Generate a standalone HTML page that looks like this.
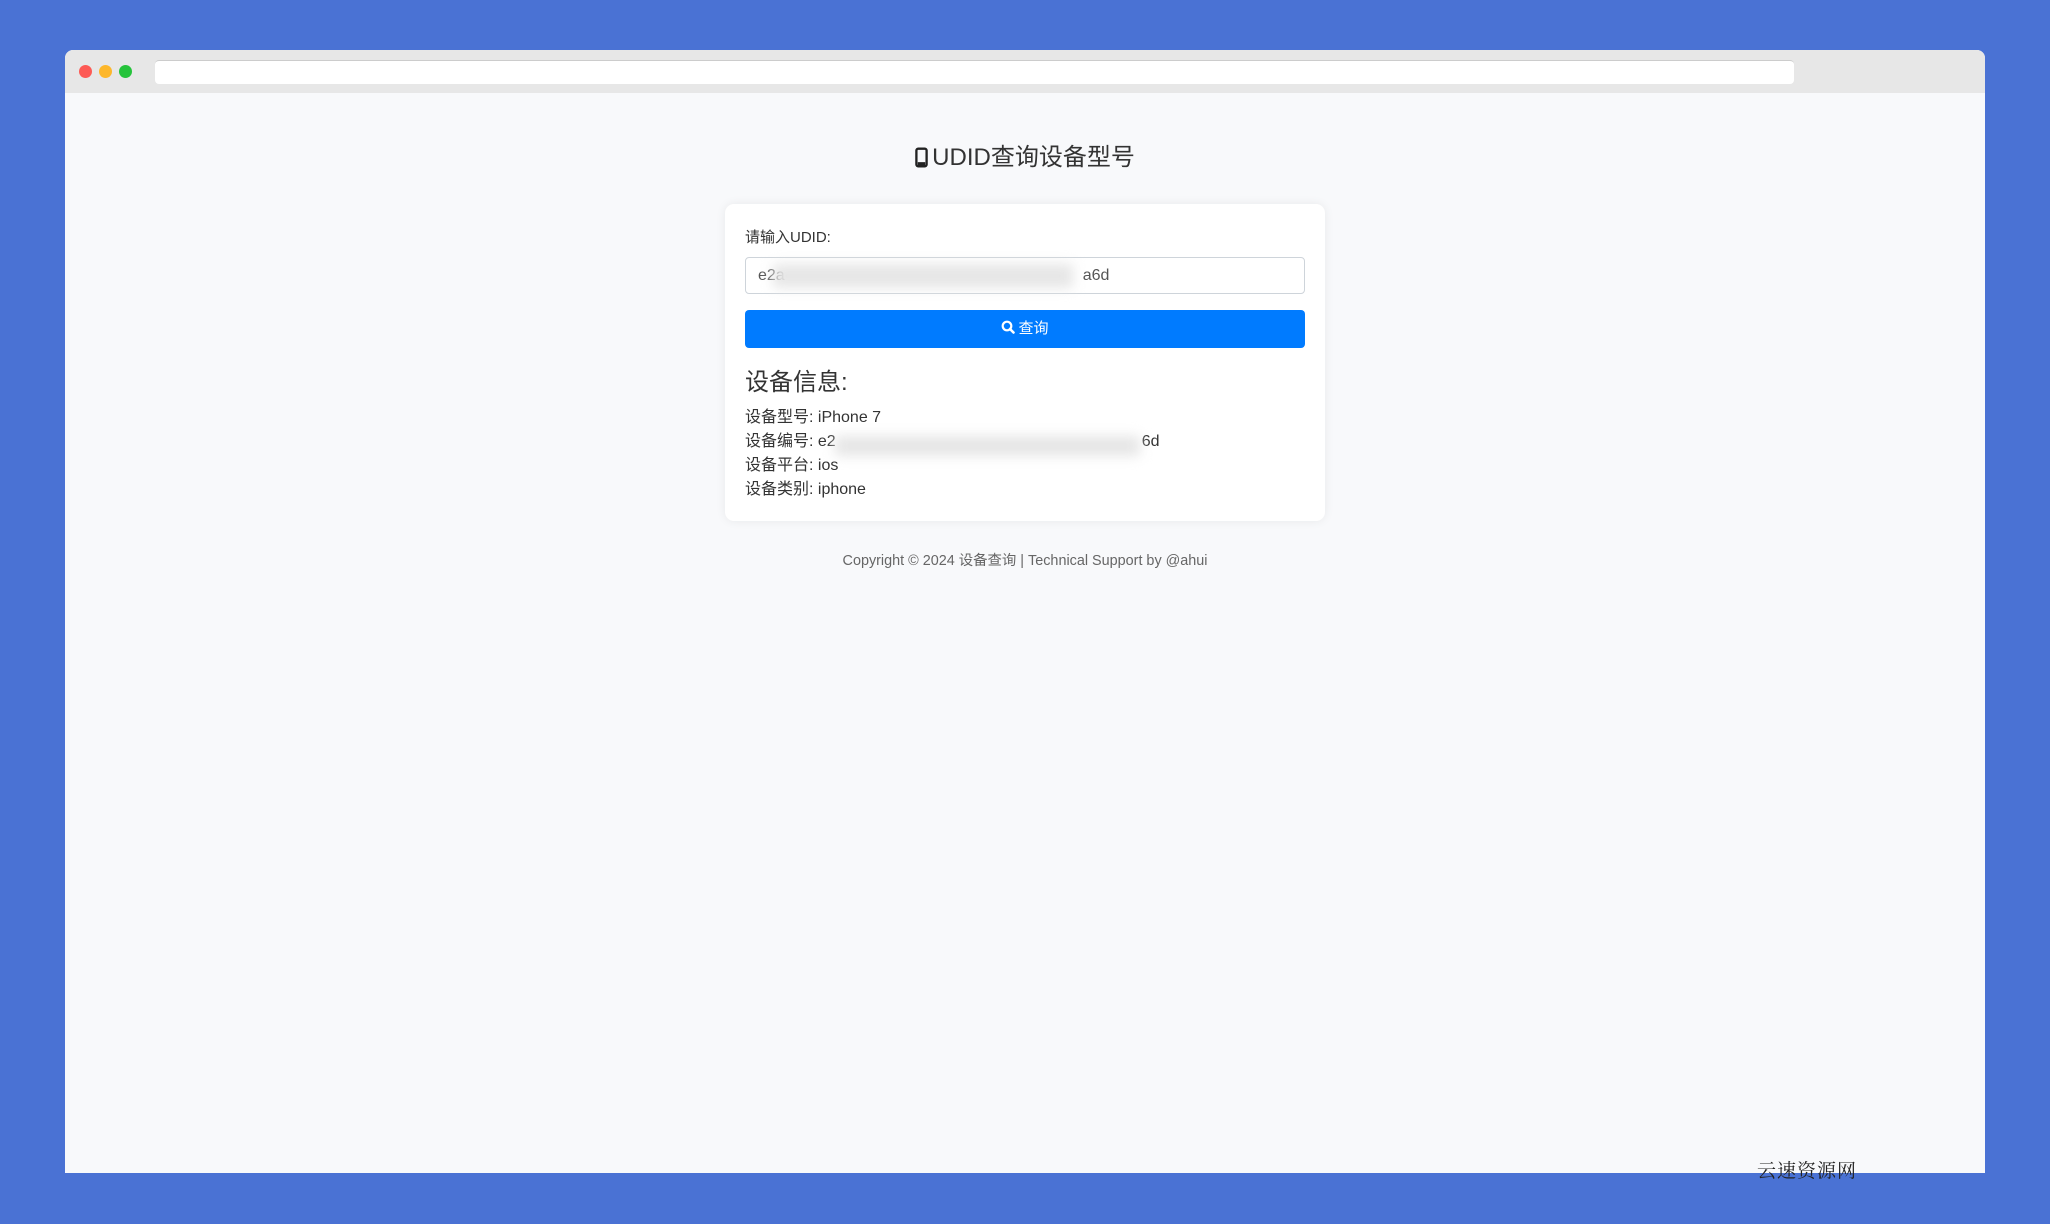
<!DOCTYPE html>
<html><head><meta charset="utf-8"><style>
*{box-sizing:border-box;margin:0;padding:0}
body{width:2050px;height:1224px;background:#4a72d4;position:relative;overflow:hidden;font-family:"Liberation Sans","Noto Sans CJK SC",sans-serif;color:#333}
.win{position:absolute;left:65px;top:50px;width:1920px;height:1123px;background:#f8f9fb;border-radius:8px 8px 0 0;overflow:hidden}
.bar{height:43px;background:#e7e7e7;position:relative}
.dot{position:absolute;top:15px;width:13px;height:13px;border-radius:50%}
.addr{position:absolute;left:90px;top:10px;width:1639px;height:24px;background:#fff;border-radius:4px;border-top:1px solid #ccc}
h1{position:absolute;left:0;width:100%;top:93px;text-align:center;font-weight:normal;font-size:24px;color:#333;line-height:30px}
.card{position:absolute;left:660px;top:154px;width:600px;height:317px;background:#fff;border-radius:9px;box-shadow:0 0 10px rgba(0,0,0,.07);padding:0 20px}
.lbl{position:absolute;left:20px;top:22px;font-size:15px}
.inp{position:absolute;left:20px;top:53px;width:560px;height:37px;border:1px solid #ced4da;border-radius:4px;font-size:16px;color:#555;padding:8px 12px;line-height:20px}
.btn{position:absolute;left:20px;top:106px;width:560px;height:38px;background:#007bff;border-radius:4px;color:#fff;font-size:15px;text-align:center;line-height:38px}
.h2{position:absolute;left:20px;top:164px;font-size:24px;line-height:30px}
.row{position:absolute;left:20px;font-size:16px;line-height:20px}
.blur{position:absolute;background:#e6e6e6;filter:blur(6px)}
.foot{position:absolute;top:499px;width:100%;text-align:center;font-size:14.4px;color:#666}
.wm{position:absolute;left:1757px;top:1156px;font-family:"Noto Serif CJK SC",serif;font-size:19px;color:#222;letter-spacing:1px}
</style></head><body>
<div class="win">
<div class="bar"><div class="dot" style="left:14px;background:#fd5a55"></div><div class="dot" style="left:34px;background:#fdb72b"></div><div class="dot" style="left:54px;background:#25c33b"></div><div class="addr"></div></div>
<h1><svg width="13" height="21" viewBox="0 0 14 22" style="vertical-align:-3px;margin-right:4px"><rect x="1.5" y="1.5" width="11" height="19" rx="2" fill="none" stroke="#222" stroke-width="2.5"/><rect x="3" y="16" width="8" height="4" fill="#222"/></svg>UDID查询设备型号</h1>
<div class="card">
<div class="lbl">请输入UDID:</div>
<div class="inp">e2a<span style="padding-left:298px">a6d</span></div>
<div class="blur" style="left:48px;top:60px;width:300px;height:24px"></div>
<div class="btn"><svg width="14" height="14" viewBox="0 0 14 14" style="vertical-align:-1px;margin-right:3px"><circle cx="6" cy="6" r="4.3" fill="none" stroke="#fff" stroke-width="2.2"/><path d="M9 9l3.5 3.5" stroke="#fff" stroke-width="2.6" stroke-linecap="round"/></svg>查询</div>
<div class="h2">设备信息:</div>
<div class="row" style="top:204px">设备型号: iPhone 7</div>
<div class="row" style="top:228px">设备编号: e2<span style="padding-left:306px">6d</span></div>
<div class="blur" style="left:110px;top:232px;width:305px;height:20px"></div>
<div class="row" style="top:252px">设备平台: ios</div>
<div class="row" style="top:276px">设备类别: iphone</div>
</div>
<div class="foot">Copyright © 2024 设备查询 | Technical Support by @ahui</div>
</div>
<div class="wm">云速资源网</div>
</body></html>
